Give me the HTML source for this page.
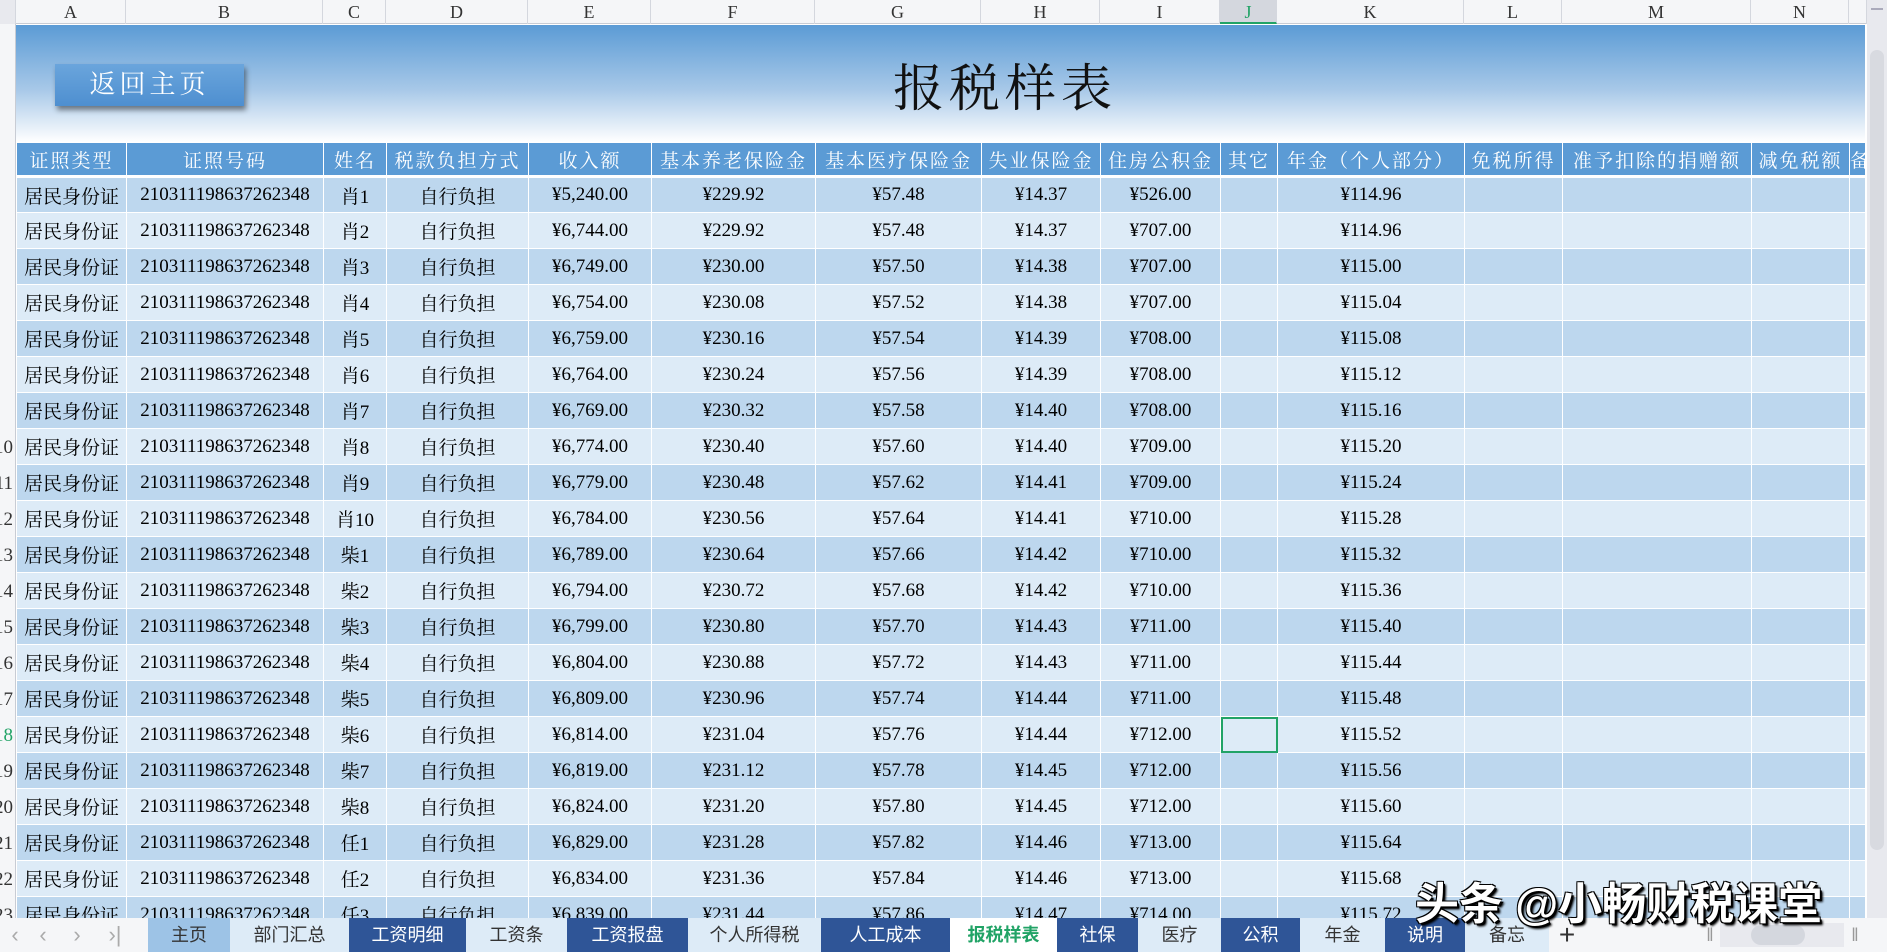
<!DOCTYPE html>
<html><head><meta charset="utf-8"><style>
*{margin:0;padding:0;box-sizing:border-box}
html,body{width:1887px;height:952px;overflow:hidden}
body{background:#fff;position:relative;font-family:"Liberation Serif","Noto Serif CJK SC",serif;}
#colhdr{position:absolute;left:0;top:0;height:24px;width:1867px;background:#f5f6f8;border-bottom:1px solid #c8ccd4;}
#colhdr div{position:absolute;top:0;height:24px;line-height:24px;text-align:center;font-size:18px;color:#333;border-right:1px solid #d4d7de}
#rowhdr{position:absolute;left:0;top:24px;width:16px;height:894px;background:#f5f6f8;border-right:1px solid #c8ccd4;overflow:hidden}
#rowhdr div{position:absolute;right:2px;height:36px;line-height:36px;font-size:19px;color:#333;text-align:right;white-space:nowrap}
#banner{position:absolute;left:16px;top:25px;width:1849px;height:117px;background:linear-gradient(#5b9bd5,#a7c8e8 55%,#fff)}
#btn{position:absolute;left:55px;top:64px;width:189px;height:42px;background:linear-gradient(#6aa5dc,#4e8fd0);box-shadow:2px 4px 5px rgba(0,0,0,.45);color:#fff;font-size:26px;text-align:center;line-height:42px;letter-spacing:4px}
#title{position:absolute;left:855px;top:58px;width:300px;text-align:center;font-size:51px;line-height:64px;color:#111;letter-spacing:5px}
table{position:absolute;left:16px;top:142px;border-collapse:collapse;table-layout:fixed;width:1849px}
td,th{border:1px solid #fff;height:36px;text-align:center;font-size:19px;white-space:nowrap;overflow:hidden;padding:0}
th{background:#5b9bd5;color:#fff;font-weight:normal;height:34px;letter-spacing:2px;border-bottom:3px solid #fff}
tr.o td{background:#bdd7ee}
tr.e td{background:#ddebf7}
td.sel{outline:2px solid #21a366;outline-offset:-2px}
#vs{position:absolute;left:1867px;top:0;width:20px;height:918px;background:#e8e9ee}
#tabs{position:absolute;left:0;top:918px;width:1887px;height:34px;background:#f5f6f8;font-family:"Liberation Sans","Noto Sans CJK SC",sans-serif;overflow:hidden}
#tabs div{position:absolute;top:0;height:34px;line-height:34px;text-align:center;font-size:18px;white-space:nowrap;overflow:hidden}
.d{background:#2f5597;color:#fff}
.l{background:#ddebf7;color:#333}
#wm{position:absolute;left:1415px;top:868px;font-family:"Liberation Sans","Noto Sans CJK SC",sans-serif;font-size:44px;color:#fff;font-weight:bold;text-shadow:2px 2px 0 #000,-1px -1px 0 #000,1px -1px 0 #000,-1px 1px 0 #000,3px 3px 2px #000;white-space:nowrap}
</style></head><body>
<div id="colhdr">
<div style="left:0;width:16px;background:#e8e9ee"></div>
<div style="left:16px;width:110px">A</div>
<div style="left:126px;width:197px">B</div>
<div style="left:323px;width:63px">C</div>
<div style="left:386px;width:142px">D</div>
<div style="left:528px;width:123px">E</div>
<div style="left:651px;width:164px">F</div>
<div style="left:815px;width:166px">G</div>
<div style="left:981px;width:119px">H</div>
<div style="left:1100px;width:120px">I</div>
<div style="left:1220px;width:57px;background:#d4d7de;color:#21a366;border-bottom:2px solid #21a366">J</div>
<div style="left:1277px;width:187px">K</div>
<div style="left:1464px;width:98px">L</div>
<div style="left:1562px;width:189px">M</div>
<div style="left:1751px;width:98px">N</div>
<div style="left:1849px;width:18px"></div>
</div>
<div id="rowhdr">
<div style="top:406px">10</div><div style="top:442px">11</div><div style="top:478px">12</div><div style="top:514px">13</div><div style="top:550px">14</div><div style="top:586px">15</div><div style="top:622px">16</div><div style="top:658px">17</div><div style="top:694px;color:#21a366">18</div><div style="top:730px">19</div><div style="top:766px">20</div><div style="top:802px">21</div><div style="top:838px">22</div><div style="top:874px">23</div>
</div>
<div id="banner"></div>
<div id="btn">返回主页</div>
<div id="title">报税样表</div>
<table>
<colgroup><col style="width:110px"><col style="width:197px"><col style="width:63px"><col style="width:142px"><col style="width:123px"><col style="width:164px"><col style="width:166px"><col style="width:119px"><col style="width:120px"><col style="width:57px"><col style="width:187px"><col style="width:98px"><col style="width:189px"><col style="width:98px"><col style="width:16px"></colgroup>
<tr><th>证照类型</th><th>证照号码</th><th>姓名</th><th>税款负担方式</th><th>收入额</th><th>基本养老保险金</th><th>基本医疗保险金</th><th>失业保险金</th><th>住房公积金</th><th>其它</th><th>年金（个人部分）</th><th>免税所得</th><th>准予扣除的捐赠额</th><th>减免税额</th><th>备</th></tr>
<tr class="o"><td>居民身份证</td><td>210311198637262348</td><td>肖1</td><td>自行负担</td><td>¥5,240.00</td><td>¥229.92</td><td>¥57.48</td><td>¥14.37</td><td>¥526.00</td><td></td><td>¥114.96</td><td></td><td></td><td></td><td></td></tr>
<tr class="e"><td>居民身份证</td><td>210311198637262348</td><td>肖2</td><td>自行负担</td><td>¥6,744.00</td><td>¥229.92</td><td>¥57.48</td><td>¥14.37</td><td>¥707.00</td><td></td><td>¥114.96</td><td></td><td></td><td></td><td></td></tr>
<tr class="o"><td>居民身份证</td><td>210311198637262348</td><td>肖3</td><td>自行负担</td><td>¥6,749.00</td><td>¥230.00</td><td>¥57.50</td><td>¥14.38</td><td>¥707.00</td><td></td><td>¥115.00</td><td></td><td></td><td></td><td></td></tr>
<tr class="e"><td>居民身份证</td><td>210311198637262348</td><td>肖4</td><td>自行负担</td><td>¥6,754.00</td><td>¥230.08</td><td>¥57.52</td><td>¥14.38</td><td>¥707.00</td><td></td><td>¥115.04</td><td></td><td></td><td></td><td></td></tr>
<tr class="o"><td>居民身份证</td><td>210311198637262348</td><td>肖5</td><td>自行负担</td><td>¥6,759.00</td><td>¥230.16</td><td>¥57.54</td><td>¥14.39</td><td>¥708.00</td><td></td><td>¥115.08</td><td></td><td></td><td></td><td></td></tr>
<tr class="e"><td>居民身份证</td><td>210311198637262348</td><td>肖6</td><td>自行负担</td><td>¥6,764.00</td><td>¥230.24</td><td>¥57.56</td><td>¥14.39</td><td>¥708.00</td><td></td><td>¥115.12</td><td></td><td></td><td></td><td></td></tr>
<tr class="o"><td>居民身份证</td><td>210311198637262348</td><td>肖7</td><td>自行负担</td><td>¥6,769.00</td><td>¥230.32</td><td>¥57.58</td><td>¥14.40</td><td>¥708.00</td><td></td><td>¥115.16</td><td></td><td></td><td></td><td></td></tr>
<tr class="e"><td>居民身份证</td><td>210311198637262348</td><td>肖8</td><td>自行负担</td><td>¥6,774.00</td><td>¥230.40</td><td>¥57.60</td><td>¥14.40</td><td>¥709.00</td><td></td><td>¥115.20</td><td></td><td></td><td></td><td></td></tr>
<tr class="o"><td>居民身份证</td><td>210311198637262348</td><td>肖9</td><td>自行负担</td><td>¥6,779.00</td><td>¥230.48</td><td>¥57.62</td><td>¥14.41</td><td>¥709.00</td><td></td><td>¥115.24</td><td></td><td></td><td></td><td></td></tr>
<tr class="e"><td>居民身份证</td><td>210311198637262348</td><td>肖10</td><td>自行负担</td><td>¥6,784.00</td><td>¥230.56</td><td>¥57.64</td><td>¥14.41</td><td>¥710.00</td><td></td><td>¥115.28</td><td></td><td></td><td></td><td></td></tr>
<tr class="o"><td>居民身份证</td><td>210311198637262348</td><td>柴1</td><td>自行负担</td><td>¥6,789.00</td><td>¥230.64</td><td>¥57.66</td><td>¥14.42</td><td>¥710.00</td><td></td><td>¥115.32</td><td></td><td></td><td></td><td></td></tr>
<tr class="e"><td>居民身份证</td><td>210311198637262348</td><td>柴2</td><td>自行负担</td><td>¥6,794.00</td><td>¥230.72</td><td>¥57.68</td><td>¥14.42</td><td>¥710.00</td><td></td><td>¥115.36</td><td></td><td></td><td></td><td></td></tr>
<tr class="o"><td>居民身份证</td><td>210311198637262348</td><td>柴3</td><td>自行负担</td><td>¥6,799.00</td><td>¥230.80</td><td>¥57.70</td><td>¥14.43</td><td>¥711.00</td><td></td><td>¥115.40</td><td></td><td></td><td></td><td></td></tr>
<tr class="e"><td>居民身份证</td><td>210311198637262348</td><td>柴4</td><td>自行负担</td><td>¥6,804.00</td><td>¥230.88</td><td>¥57.72</td><td>¥14.43</td><td>¥711.00</td><td></td><td>¥115.44</td><td></td><td></td><td></td><td></td></tr>
<tr class="o"><td>居民身份证</td><td>210311198637262348</td><td>柴5</td><td>自行负担</td><td>¥6,809.00</td><td>¥230.96</td><td>¥57.74</td><td>¥14.44</td><td>¥711.00</td><td></td><td>¥115.48</td><td></td><td></td><td></td><td></td></tr>
<tr class="e"><td>居民身份证</td><td>210311198637262348</td><td>柴6</td><td>自行负担</td><td>¥6,814.00</td><td>¥231.04</td><td>¥57.76</td><td>¥14.44</td><td>¥712.00</td><td class="sel"></td><td>¥115.52</td><td></td><td></td><td></td><td></td></tr>
<tr class="o"><td>居民身份证</td><td>210311198637262348</td><td>柴7</td><td>自行负担</td><td>¥6,819.00</td><td>¥231.12</td><td>¥57.78</td><td>¥14.45</td><td>¥712.00</td><td></td><td>¥115.56</td><td></td><td></td><td></td><td></td></tr>
<tr class="e"><td>居民身份证</td><td>210311198637262348</td><td>柴8</td><td>自行负担</td><td>¥6,824.00</td><td>¥231.20</td><td>¥57.80</td><td>¥14.45</td><td>¥712.00</td><td></td><td>¥115.60</td><td></td><td></td><td></td><td></td></tr>
<tr class="o"><td>居民身份证</td><td>210311198637262348</td><td>任1</td><td>自行负担</td><td>¥6,829.00</td><td>¥231.28</td><td>¥57.82</td><td>¥14.46</td><td>¥713.00</td><td></td><td>¥115.64</td><td></td><td></td><td></td><td></td></tr>
<tr class="e"><td>居民身份证</td><td>210311198637262348</td><td>任2</td><td>自行负担</td><td>¥6,834.00</td><td>¥231.36</td><td>¥57.84</td><td>¥14.46</td><td>¥713.00</td><td></td><td>¥115.68</td><td></td><td></td><td></td><td></td></tr>
<tr class="o"><td>居民身份证</td><td>210311198637262348</td><td>任3</td><td>自行负担</td><td>¥6,839.00</td><td>¥231.44</td><td>¥57.86</td><td>¥14.47</td><td>¥714.00</td><td></td><td>¥115.72</td><td></td><td></td><td></td><td></td></tr>
</table>
<div id="vs"><div style="position:absolute;left:4px;top:8px;width:12px;height:2px;background:#aab"></div><div style="position:absolute;left:3px;top:50px;width:14px;height:800px;background:#d8dae0;border-radius:7px"></div></div>
<div id="tabs">
<div style="left:0;width:30px;color:#aaa;font-size:22px">‹</div>
<div style="left:28px;width:30px;color:#aaa;font-size:22px">‹</div>
<div style="left:62px;width:30px;color:#aaa;font-size:22px">›</div>
<div style="left:100px;width:30px;color:#aaa;font-size:22px">›|</div>
<div style="left:148px;width:82px;background:#9dc3e6;color:#333">主页</div>
<div class="l" style="left:230px;width:119px">部门汇总</div>
<div class="d" style="left:349px;width:117px">工资明细</div>
<div class="l" style="left:466px;width:101px">工资条</div>
<div class="d" style="left:567px;width:121px">工资报盘</div>
<div class="l" style="left:688px;width:133px">个人所得税</div>
<div class="d" style="left:821px;width:129px">人工成本</div>
<div style="left:950px;width:107px;background:#fff;color:#21a366;font-weight:bold">报税样表</div>
<div class="d" style="left:1057px;width:81px">社保</div>
<div class="l" style="left:1138px;width:83px">医疗</div>
<div class="d" style="left:1221px;width:79px">公积</div>
<div class="l" style="left:1300px;width:85px">年金</div>
<div class="d" style="left:1385px;width:80px">说明</div>
<div class="l" style="left:1465px;width:84px">备忘</div>
<div style="left:1552px;width:30px;font-size:28px;color:#333">+</div>
<div style="left:1705px;width:10px;color:#999">‖</div>
<div style="left:1720px;width:124px;top:5px;height:24px;background:#e8e9ee"><div style="position:absolute;left:31px;top:2px;width:54px;height:20px;background:#d4d7de;border-radius:10px"></div></div>
<div style="left:1850px;width:10px;color:#999">‖</div>
</div>
<div id="wm">头条 @小畅财税课堂</div>
</body></html>
